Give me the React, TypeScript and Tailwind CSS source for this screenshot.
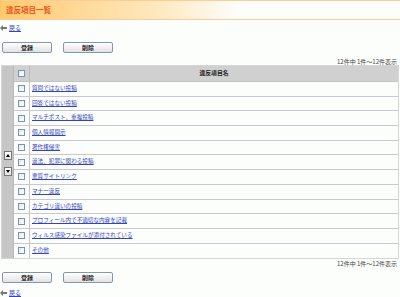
import React from "react";

const items = [
  "質問ではない投稿",
  "回答ではない投稿",
  "マルチポスト、重複投稿",
  "個人情報開示",
  "著作権侵害",
  "違法、犯罪に関わる投稿",
  "悪質サイトリンク",
  "マナー違反",
  "カテゴリ違いの投稿",
  "プロフィール内で不適切な内容を記載",
  "ウィルス感染ファイルが添付されている",
  "その他",
];

function Checkbox() {
  return (
    <span className="block w-[7px] h-[7px] border border-[#7b93b3] bg-gradient-to-br from-[#e4e8ee] to-white" />
  );
}

function BackLink() {
  return (
    <div className="flex items-center gap-[2px] h-[10px]">
      <svg width="7" height="6" viewBox="0 0 7 6">
        <path d="M0 3 L3 0 L3 2 L7 2 L7 4 L3 4 L3 6 Z" fill="#777" />
      </svg>
      <a className="text-[6px] leading-none text-[#3344bb] underline">戻る</a>
    </div>
  );
}

function Buttons() {
  return (
    <div className="flex gap-[11px] pl-[2px]">
      {["登録", "削除"].map((t) => (
        <button
          key={t}
          className="w-[50px] h-[11px] rounded-[2px] border border-[#8497b0] bg-gradient-to-b from-white to-[#e2e2e2] text-[6px] leading-none font-bold text-[#222] flex items-center justify-center"
        >
          {t}
        </button>
      ))}
    </div>
  );
}

function Count() {
  return (
    <div className="h-[7px] pr-[3px] text-right text-[6px] leading-[7px] text-[#444]">
      12件中 1件～12件表示
    </div>
  );
}

function Arrow({ up }: { up?: boolean }) {
  return (
    <span className="w-[8px] h-[9px] border border-[#777] bg-gradient-to-b from-white to-[#e4e4e4] flex items-center justify-center">
      <svg width="4" height="3" viewBox="0 0 4 3">
        <path d={up ? "M0 3 L2 0 L4 3 Z" : "M0 0 L4 0 L2 3 Z"} fill="#000" />
      </svg>
    </span>
  );
}

export default function App() {
  return (
    <div
      className="w-[400px] h-[297px] bg-[#fcfefc] overflow-hidden"
      style={{ fontFamily: '"Noto Sans CJK JP", "Noto Sans", sans-serif' }}
    >
      <div className="h-[20px] border-t border-b border-[#ffcc99] bg-gradient-to-r from-[#ffc96a] via-[#ffe9c0] via-40% to-[#fcfefc] to-60% flex items-center pl-[6px]">
        <span className="text-[7.5px] leading-none font-bold text-[#ee5522]">違反項目一覧</span>
      </div>

      <div className="mt-[3px]">
        <BackLink />
      </div>

      <div className="mt-[9px]">
        <Buttons />
      </div>

      <div className="mt-[5px]">
        <Count />
      </div>

      <div className="mx-[1px] w-[398px] flex border border-[#d6d6d6]">
        <div className="w-[12px] bg-[#c6c6c6] border-r border-[#b8b8b8] flex flex-col items-center justify-center gap-[7px] pt-[2px]">
          <Arrow up />
          <Arrow />
        </div>
        <div className="flex-1">
          <div className="flex h-[16px] bg-[#d0d0d0] border-b border-[#c4c4c4]">
            <div className="w-[16px] border-r border-[#bdbdbd] flex items-center justify-center">
              <Checkbox />
            </div>
            <div className="flex-1 flex items-center justify-center text-[5.8px] font-bold text-[#222]">
              違反項目名
            </div>
          </div>
          {items.map((t) => (
            <div key={t} className="flex h-[14.7px] border-b border-[#c8c8d0] last:border-b-0">
              <div className="w-[16px] border-r border-[#c4c4c4] flex items-center justify-center">
                <Checkbox />
              </div>
              <div className="flex-1 flex items-center pl-[2px]">
                <a className="text-[5.6px] leading-none text-[#3344bb] underline">{t}</a>
              </div>
            </div>
          ))}
        </div>
      </div>

      <div className="mt-[1px]">
        <Count />
      </div>

      <div className="mt-[5px]">
        <Buttons />
      </div>

      <div className="mt-[5px]">
        <BackLink />
      </div>
    </div>
  );
}
